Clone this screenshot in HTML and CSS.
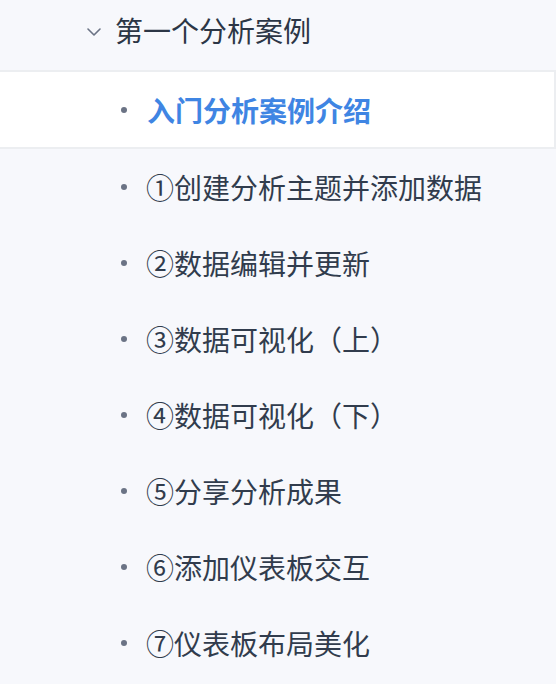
FILE: index.html
```html
<!DOCTYPE html>
<html lang="zh-CN">
<head>
    <meta charset="UTF-8">
    <meta name="viewport" content="width=device-width, initial-scale=1.0">
    <title>第一个分析案例</title>
    <link rel="stylesheet" href="styles.css">
</head>
<body>
    <aside class="sidebar">
        <div class="group-title">
            <svg class="chevron" width="14" height="8" viewBox="0 0 14 8">
                <path d="M1 1 L7 7 L13 1" fill="none" stroke="#6b7385" stroke-width="1.6" stroke-linecap="round" stroke-linejoin="round"/>
            </svg>
            <span>第一个分析案例</span>
        </div>
        <ul class="links">
            <li class="link active"><span class="dot"></span><span class="label">入门分析案例介绍</span></li>
            <li class="link"><span class="dot"></span><span class="label">①创建分析主题并添加数据</span></li>
            <li class="link"><span class="dot"></span><span class="label">②数据编辑并更新</span></li>
            <li class="link"><span class="dot"></span><span class="label">③数据可视化（上）</span></li>
            <li class="link"><span class="dot"></span><span class="label">④数据可视化（下）</span></li>
            <li class="link"><span class="dot"></span><span class="label">⑤分享分析成果</span></li>
            <li class="link"><span class="dot"></span><span class="label">⑥添加仪表板交互</span></li>
            <li class="link"><span class="dot"></span><span class="label">⑦仪表板布局美化</span></li>
        </ul>
    </aside>
</body>
</html>
```

FILE: styles.css
```css
body {
    margin: 0;
    padding: 0;
    background: #ffffff;
    font-family: "Noto Sans CJK SC", "Noto Sans", sans-serif;
    color: #2f3a4a;
}
.sidebar {
    width: 556px;
    height: 684px;
    background: #f7f8fc;
    overflow: hidden;
}
.group-title {
    display: flex;
    align-items: center;
    height: 60px;
    margin-bottom: 10px;
    padding-left: 87px;
    font-size: 28px;
    color: #2c3646;
}
.chevron {
    margin-right: 14px;
    margin-top: 3px;
}
.links {
    list-style: none;
    margin: 0;
    padding: 0;
}
.link {
    display: flex;
    align-items: center;
    height: 76px;
    padding-left: 121px;
    font-size: 28px;
    color: #313c4d;
}
.dot {
    width: 6px;
    height: 6px;
    border-radius: 50%;
    background: #6b7385;
    margin-right: 19px;
    flex-shrink: 0;
}
.link.active {
    width: 433px;
    height: 75px;
    background: #ffffff;
    border-top: 2px solid #eceef1;
    border-bottom: 2px solid #eceef1;
    border-right: 2px solid #eceef1;
}
.link.active .label {
    color: #3f85e3;
    font-weight: 700;
    padding-left: 1px;
}
```
